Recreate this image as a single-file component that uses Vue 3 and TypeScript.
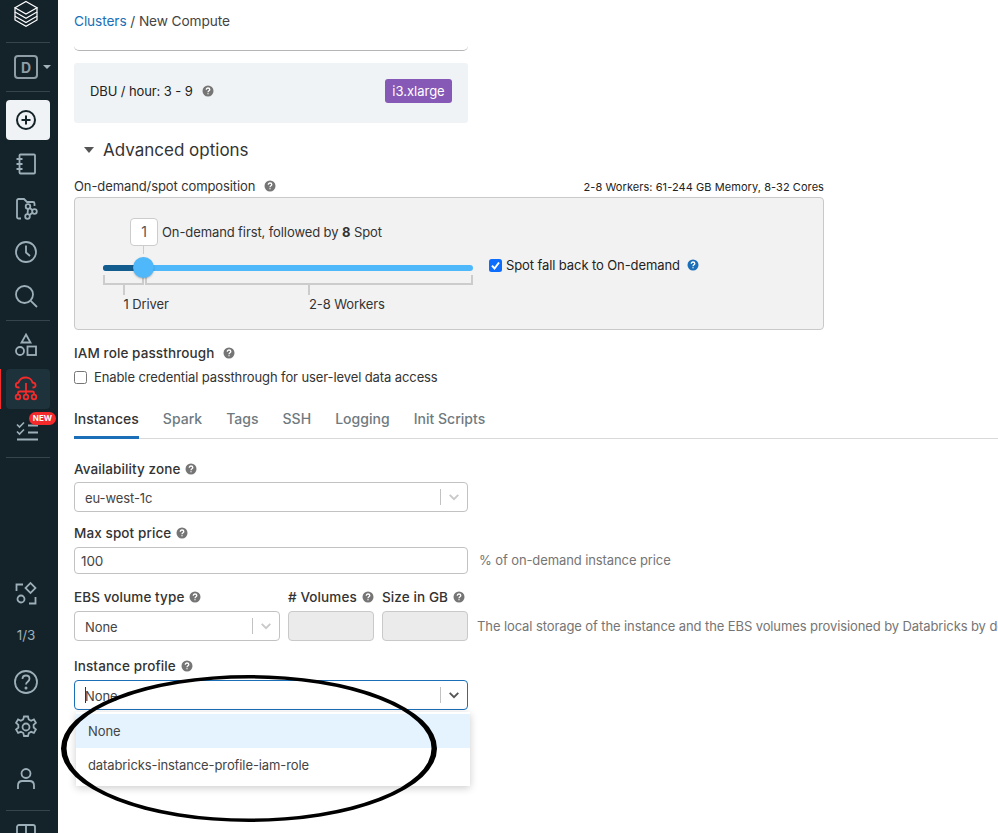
<script setup lang="ts">
const tabs: string[] = ['Instances', 'Spark', 'Tags', 'SSH', 'Logging', 'Init Scripts']
</script>

<template>
  <div class="page">
    <aside class="sidebar">
      <div class="logo">
        <svg width="28" height="28" viewBox="0 0 28 28" fill="none" stroke="#fff" stroke-width="1.2">
          <path d="M14 1.5 25 7.8 14 14 3 7.8Z" />
          <path d="M3 7.8V12L14 18.3 25 12V7.8" />
          <path d="M3 12V16.2L14 22.5 25 16.2V12" />
          <path d="M3 16.2V20L14 26.3 25 20V16.2" />
        </svg>
      </div>
      <div class="divider first"></div>
      <div class="workspace">
        <span class="ws-box">D</span>
        <span class="ws-caret"></span>
      </div>
      <div class="divider second"></div>

      <div class="nav create">
        <svg width="28" height="28" viewBox="0 0 28 28" fill="none" stroke="#14222a" stroke-width="2">
          <circle cx="14" cy="14" r="9" />
          <path d="M14 9.5v9M9.5 14h9" />
        </svg>
      </div>
      <div class="nav">
        <svg class="ico" viewBox="0 0 28 28">
          <rect x="7.5" y="4.500" width="15.500" height="19" rx="1" />
          <path d="M4.500 9h6M4.500 14h6M4.500 19h6" />
        </svg>
      </div>
      <div class="nav">
        <svg class="ico" viewBox="0 0 28 28">
          <path d="M9 24.500H6.500A1.500 1.500 0 0 1 5 23V6.500A1.500 1.500 0 0 1 6.500 5H12l3 3h6A1.500 1.500 0 0 1 22.500 9.500V12" />
          <circle cx="16" cy="12.500" r="2.300" />
          <circle cx="15.500" cy="22.500" r="2.300" />
          <circle cx="22.500" cy="17.500" r="2.300" />
          <path d="M16 14.800l-.5 5.400M17.800 14l2.700 2.300M17.500 21l3-2.300" />
        </svg>
      </div>
      <div class="nav">
        <svg class="ico" viewBox="0 0 28 28">
          <circle cx="14" cy="14" r="10" />
          <path d="M14 7.500V14.500L18 18" />
        </svg>
      </div>
      <div class="nav">
        <svg class="ico" viewBox="0 0 28 28">
          <circle cx="12.500" cy="12.500" r="8.500" />
          <path d="M18.800 18.800 25 25" />
        </svg>
      </div>
      <div class="divider third"></div>
      <div class="nav">
        <svg class="ico" viewBox="0 0 28 28">
          <path d="M14 3.500 18.500 11.500H9.500Z" />
          <circle cx="8" cy="20" r="4" />
          <rect x="15.500" y="15.500" width="8.500" height="8.500" />
        </svg>
      </div>
      <div class="nav active">
        <svg class="ico red" viewBox="0 0 28 28">
          <path d="M7.500 12.500H6.500C3 12.500 2.800 8 6.500 7.500 7.500 4 10.500 2.500 14 2.500 17 2.500 20 4.500 20.500 7.500 24.500 8 24.500 12.500 21 12.500H20.500" />
          <path d="M14 8V19.500M6 19.500V18c0-1 .5-1.500 1.500-1.500h13c1 0 1.500.5 1.500 1.500V19.500" />
          <circle cx="6" cy="22" r="2.300" />
          <circle cx="14" cy="22" r="2.300" />
          <circle cx="22" cy="22" r="2.300" />
        </svg>
      </div>
      <div class="nav tasks">
        <svg class="ico" viewBox="0 0 28 28">
          <path d="M16 8.500h10M16 15.500h10M5 22.500h21" />
          <path d="M5 7.500 7.500 10 12 5.500M5 14.500 7.500 17 12 12.500" stroke-width="1.700" />
        </svg>
        <span class="new-badge">NEW</span>
      </div>
      <div class="divider fourth"></div>

      <div class="bottom">
        <div class="nav short">
          <svg class="ico" viewBox="0 0 28 28">
            <path d="M4.500 11V4.500H11M23.500 17V23.500H17" />
            <rect x="15" y="4.500" width="7" height="7" transform="rotate(45 18.500 8)" />
            <circle cx="9" cy="19" r="3.500" />
          </svg>
        </div>
        <div class="count">1/3</div>
        <div class="nav help">
          <svg class="ico" viewBox="0 0 28 28">
            <circle cx="14" cy="14" r="11" />
            <path d="M10.500 11c0-2.300 1.600-3.500 3.500-3.500s3.500 1.300 3.500 3.300c0 3-3.500 2.800-3.500 5.700" />
            <circle cx="14" cy="20" r=".6" />
          </svg>
        </div>
        <div class="nav">
          <svg class="ico" viewBox="0 0 28 28">
            <circle cx="14" cy="14" r="3.500" />
            <path d="M12 3.500h4l.7 3 2.400 1.200 2.800-1.300 2 3.400-2.300 2 .1 2.700 2.200 2-2 3.400-2.800-1.100-2.300 1.300-.8 2.900h-4l-.7-3-2.400-1.200-2.800 1.100-2-3.400 2.300-2-.1-2.700-2.200-2 2-3.400 2.800 1.300 2.300-1.300z" />
          </svg>
        </div>
        <div class="nav user">
          <svg class="ico" viewBox="0 0 28 28">
            <circle cx="14" cy="8.500" r="4.500" />
            <path d="M6 24v-3.500c0-3 2-4.500 4.500-4.500h7c2.500 0 4.500 1.500 4.500 4.500V24" />
          </svg>
        </div>
        <div class="divider fifth"></div>
        <div class="panel">
          <svg class="ico" viewBox="0 0 28 28">
            <rect x="5" y="5" width="18" height="18" rx="2" />
            <path d="M14 5v18" />
          </svg>
        </div>
      </div>
    </aside>

    <main class="main">
      <nav class="crumbs"><a>Clusters</a> / New Compute</nav>
      <div class="cut-field"></div>

      <section class="dbu">
        <span class="with-help">DBU / hour: 3 - 9
          <svg class="q" viewBox="0 0 12 12"><circle cx="6" cy="6" r="5.500" /><path d="M4.300 4.700C4.300 3.600 5 3 6 3s1.800.6 1.800 1.500C7.800 5.800 6 5.700 6 7.200M6 8.300v1" /></svg>
        </span>
        <span class="chip">i3.xlarge</span>
      </section>

      <h2 class="advanced"><span class="tri"></span>Advanced options</h2>

      <div class="comp-head">
        <span class="with-help">On-demand/spot composition
          <svg class="q" viewBox="0 0 12 12"><circle cx="6" cy="6" r="5.500" /><path d="M4.300 4.700C4.300 3.600 5 3 6 3s1.800.6 1.800 1.500C7.800 5.800 6 5.700 6 7.200M6 8.300v1" /></svg>
        </span>
        <span class="comp-summary">2-8 Workers: 61-244 GB Memory, 8-32 Cores</span>
      </div>

      <section class="comp-box">
        <div class="slider">
          <div class="count-row">
            <span class="count-box">1</span>
            <span>On-demand first, followed by <b>8</b> Spot</span>
          </div>
          <div class="stem"></div>
          <div class="track">
            <div class="track-fill"></div>
            <div class="thumb"></div>
          </div>
          <div class="ranges">
            <div class="range driver">
              <div class="bracket"></div>
              <div class="drop"></div>
              <div class="range-label">1 Driver</div>
            </div>
            <div class="range workers">
              <div class="bracket"></div>
              <div class="drop"></div>
              <div class="range-label">2-8 Workers</div>
            </div>
          </div>
        </div>
        <label class="fallback">
          <span class="check on">
            <svg viewBox="0 0 13 13" width="13" height="13"><path d="M3 6.700 5.500 9.500 10 3.500" fill="none" stroke="#fff" stroke-width="2" /></svg>
          </span>
          <span>Spot fall back to On-demand</span>
          <svg class="q blue" viewBox="0 0 12 12"><circle cx="6" cy="6" r="5.500" /><path d="M4.300 4.700C4.300 3.600 5 3 6 3s1.800.6 1.800 1.500C7.800 5.800 6 5.700 6 7.200M6 8.300v1" /></svg>
        </label>
      </section>

      <div class="iam-label">IAM role passthrough
        <svg class="q" viewBox="0 0 12 12"><circle cx="6" cy="6" r="5.500" /><path d="M4.300 4.700C4.300 3.600 5 3 6 3s1.800.6 1.800 1.500C7.800 5.800 6 5.700 6 7.200M6 8.300v1" /></svg>
      </div>
      <label class="iam-check"><span class="check"></span>Enable credential passthrough for user-level data access</label>

      <div class="tabs">
        <span v-for="(t, i) in tabs" :key="t" class="tab" :class="{ current: i === 0 }">{{ t }}</span>
      </div>

      <div class="field-label first-label">Availability zone
        <svg class="q" viewBox="0 0 12 12"><circle cx="6" cy="6" r="5.500" /><path d="M4.300 4.700C4.300 3.600 5 3 6 3s1.800.6 1.800 1.500C7.800 5.800 6 5.700 6 7.200M6 8.300v1" /></svg>
      </div>
      <div class="select full">
        <span class="value">eu-west-1c</span>
        <span class="sep"></span>
        <svg class="chev" viewBox="0 0 14 10"><path d="M2 2.500 7 7.500 12 2.500" /></svg>
      </div>

      <div class="field-label spot-label">Max spot price
        <svg class="q" viewBox="0 0 12 12"><circle cx="6" cy="6" r="5.500" /><path d="M4.300 4.700C4.300 3.600 5 3 6 3s1.800.6 1.800 1.500C7.800 5.800 6 5.700 6 7.200M6 8.300v1" /></svg>
      </div>
      <div class="spot-row">
        <div class="text-input">100</div>
        <span class="hint spot-hint">% of on-demand instance price</span>
      </div>

      <div class="ebs-labels">
        <div class="field-label ebs-type">EBS volume type
          <svg class="q" viewBox="0 0 12 12"><circle cx="6" cy="6" r="5.500" /><path d="M4.300 4.700C4.300 3.600 5 3 6 3s1.800.6 1.800 1.500C7.800 5.800 6 5.700 6 7.200M6 8.300v1" /></svg>
        </div>
        <div class="field-label ebs-num"># Volumes
          <svg class="q" viewBox="0 0 12 12"><circle cx="6" cy="6" r="5.500" /><path d="M4.300 4.700C4.300 3.600 5 3 6 3s1.800.6 1.800 1.500C7.800 5.800 6 5.700 6 7.200M6 8.300v1" /></svg>
        </div>
        <div class="field-label ebs-num">Size in GB
          <svg class="q" viewBox="0 0 12 12"><circle cx="6" cy="6" r="5.500" /><path d="M4.300 4.700C4.300 3.600 5 3 6 3s1.800.6 1.800 1.500C7.800 5.800 6 5.700 6 7.200M6 8.300v1" /></svg>
        </div>
      </div>
      <div class="ebs-row">
        <div class="select ebs-select">
          <span class="value">None</span>
          <span class="sep"></span>
          <svg class="chev" viewBox="0 0 14 10"><path d="M2 2.500 7 7.500 12 2.500" /></svg>
        </div>
        <div class="disabled-input"></div>
        <div class="disabled-input"></div>
        <span class="hint ebs-hint">The local storage of the instance and the EBS volumes provisioned by Databricks by default</span>
      </div>

      <div class="field-label profile-label">Instance profile
        <svg class="q" viewBox="0 0 12 12"><circle cx="6" cy="6" r="5.500" /><path d="M4.300 4.700C4.300 3.600 5 3 6 3s1.800.6 1.800 1.500C7.800 5.800 6 5.700 6 7.200M6 8.300v1" /></svg>
      </div>
      <div class="profile-wrap">
        <div class="select full focused">
          <span class="caret"></span>
          <span class="value">None</span>
          <span class="sep"></span>
          <svg class="chev dark" viewBox="0 0 14 10"><path d="M2 2.500 7 7.500 12 2.500" /></svg>
        </div>
        <ul class="menu">
          <li class="hover">None</li>
          <li>databricks-instance-profile-iam-role</li>
        </ul>
      </div>
    </main>

    <svg class="annotation" viewBox="0 0 998 833" width="998" height="833">
      <path fill-rule="evenodd" fill="#000" d="M61 748.500a188 73.500 0 1 0 376 0a188 73.500 0 1 0 -376 0ZM66.500 748.500a182.500 70 0 1 1 365 0a182.500 70 0 1 1 -365 0Z" />
    </svg>
  </div>
</template>

<style>
html, body { margin: 0; background: #fff; }
</style>

<style scoped>
.page {
  position: relative;
  display: flex;
  width: 998px;
  height: 833px;
  overflow: hidden;
  font-family: Inter, "Liberation Sans", sans-serif;
  font-size: 13px;
  letter-spacing: -0.1px;
  color: #333;
  background: #fff;
}

/* ---------- sidebar ---------- */
.sidebar {
  flex: 0 0 58px;
  height: 833px;
  box-sizing: border-box;
  padding-right: 6px;
  display: flex;
  flex-direction: column;
  background: #14222a;
}
.logo { height: 28px; display: flex; justify-content: center; }
.divider { height: 1px; margin: 0 2px 0 6px; background: #36454d; flex: none; }
.divider.first { margin-top: 14px; }
.workspace { height: 48px; position: relative; display: flex; align-items: center; padding-left: 14px; }
.ws-box {
  width: 24px; height: 24px; box-sizing: border-box;
  border: 2px solid #8f9ea6; border-radius: 4px;
  display: flex; align-items: center; justify-content: center;
  font-weight: 700; font-size: 14px; color: #8f9ea6;
}
.ws-caret {
  margin-left: 5px;
  border: 4px solid transparent; border-top: 4px solid #a5b2b9; border-bottom: 0;
}
.divider.second { margin-bottom: 6px; }
.nav {
  position: relative;
  height: 44px;
  display: flex;
  align-items: center;
  justify-content: center;
  flex: none;
}
.ico { width: 28px; height: 28px; fill: none; stroke: #9db0b9; stroke-width: 1.800; }
.ico.red { stroke: #f52b2b; }
.create {
  height: 40px; margin: 2px 2px 2px 6px; padding-right: 4px; background: #f0f3f5; border-radius: 4px;
}
.divider.third { margin-top: 2px; margin-bottom: 2px; }
.active {
  height: 40px; margin: 2px 2px 0 6px; padding-right: 4px; background: #1e323c; border-radius: 4px;
}
.active::before {
  content: ""; position: absolute; left: -6px; top: 0; width: 1px; height: 40px; background: #f52b2b;
}
.tasks { height: 44px; }
.new-badge {
  position: absolute; left: 29px; top: 3px;
  width: 27px; height: 13px; border-radius: 7px;
  background: #f52b2b; color: #fff;
  font-size: 8px; font-weight: 700; line-height: 13px; text-align: center; letter-spacing: 0;
}
.divider.fourth { margin-top: 4px; }
.bottom { margin-top: auto; display: flex; flex-direction: column; }
.short { height: 38px; }
.count { height: 46px; line-height: 44px; text-align: center; color: #9db0b9; font-size: 13.500px; }
.help { height: 46px; }
.user { height: 44px; margin-top: 8px; }
.divider.fifth { margin-top: 9px; }
.panel { height: 22px; display: flex; justify-content: center; overflow: hidden; align-items: flex-start; }
.panel .ico { margin-top: 9px; flex: none; }

/* ---------- main ---------- */
.main { flex: 1; min-width: 0; padding-left: 16px; }
.crumbs { height: 21px; padding-top: 11px; line-height: 20px; font-size: 13.700px; color: #444; }
.crumbs a { color: #1b6fb8; }
.cut-field {
  width: 394px; height: 19px; box-sizing: border-box;
  border-bottom: 1px solid #b5b5b5; border-radius: 0 0 5px 5px;
}
.dbu {
  width: 394px; height: 60px; margin-top: 12px; box-sizing: border-box;
  padding: 0 16px 4px; display: flex; align-items: center; justify-content: space-between;
  background: #f0f3f5; border-radius: 3px; color: #222;
}
.with-help { display: inline-flex; align-items: center; gap: 9px; white-space: nowrap; }
.q { width: 12px; height: 12px; flex: none; }
.q circle { fill: #757575; }
.q path { fill: none; stroke: #fff; stroke-width: 1.300; }
.q.blue circle { fill: #1b6fb8; }
.chip {
  width: 67px; height: 24px; border-radius: 3px;
  background: #8559b5; color: #fff; text-align: center; line-height: 25px; letter-spacing: 0;
}
.advanced {
  display: flex; align-items: center;
  height: 30px; margin: 12px 0 0 10px;
  font-size: 17px; font-weight: 400; color: #333; letter-spacing: 0;
}
.tri {
  width: 0; height: 0; margin-right: 9px;
  border: 5px solid transparent; border-top: 6px solid #555; border-bottom: 0;
}
.comp-head {
  width: 750px; height: 22px; margin-top: 10px;
  display: flex; align-items: center; justify-content: space-between;
}
.comp-summary { font-size: 11px; color: #222; letter-spacing: .07px; padding-top: 2px; }
.comp-box {
  width: 750px; height: 133px; box-sizing: border-box;
  padding: 20px 0 0 28px;
  display: flex;
  background: #f2f2f2; border: 1px solid #c9c9c9; border-radius: 4px;
}
.slider { width: 370px; flex: none; }
.count-row { display: flex; align-items: center; gap: 4px; margin-left: 27px; height: 28px; white-space: nowrap; }
.count-box {
  width: 28px; height: 28px; box-sizing: border-box;
  border: 1px solid #ccc; border-radius: 4px; background: #fff;
  text-align: center; line-height: 26px; font-size: 14px; color: #555;
}
.stem { width: 1px; height: 8px; margin: 0 0 11px 40px; background: #ccc; }
.track { position: relative; height: 6px; border-radius: 3px; background: #4fb8fb; }
.track-fill { width: 42px; height: 6px; border-radius: 3px; background: #135c8e; }
.thumb {
  position: absolute; left: 30px; top: -8px;
  width: 21px; height: 21px; border-radius: 50%;
  background: #4fb8fb; box-shadow: 0 1px 2px rgba(0,0,0,.25);
}
.ranges { display: flex; gap: 1px; margin-top: 4px; }
.driver { width: 41px; flex: none; }
.workers { flex: 1; }
.bracket { height: 10px; box-sizing: border-box; border: 2px solid #ccc; border-top: 0; }
.drop { width: 2px; height: 10px; margin-left: calc(50% - 1px); background: #ccc; }
.range-label { margin-left: 50%; margin-top: 1px; white-space: nowrap; color: #333; line-height: 16px; }
.fallback {
  display: flex; align-items: center; gap: 4px;
  height: 16px; margin: 39px 0 0 16px; white-space: nowrap; color: #222;
}
.check {
  width: 13px; height: 13px; box-sizing: border-box;
  border: 1px solid #767676; border-radius: 2.500px; background: #fff; flex: none;
  display: inline-block;
}
.check.on { border: 0; background: #0d6efd; }
.check.on svg { display: block; }
.fallback .q { margin-left: 3px; }
.iam-label {
  display: flex; align-items: center; gap: 9px; height: 18px; margin-top: 14px;
  font-size: 13.500px; font-weight: 500; color: #333; letter-spacing: .1px;
}
.iam-check { display: flex; align-items: center; gap: 7px; height: 18px; margin-top: 6px; white-space: nowrap; color: #333; }
.tabs {
  display: flex; gap: 24px; height: 35px; margin-top: 18px; box-sizing: border-box;
  border-bottom: 1px solid #d9d9d9;
}
.tab { height: 35px; box-sizing: border-box; line-height: 30px; font-size: 14px; font-weight: 500; color: #6f7a80; letter-spacing: .02px; }
.tab.current { color: #333; border-bottom: 3px solid #1b6fb8; letter-spacing: 0; }

.field-label {
  display: flex; align-items: center; gap: 5px;
  height: 18px; font-weight: 500; color: #333; white-space: nowrap; font-size: 13.500px; letter-spacing: .1px;
}
.first-label { margin-top: 21px; }
.select {
  display: flex; align-items: center; box-sizing: border-box;
  height: 30px; padding: 0 7px 0 10px;
  background: #fff; border: 1px solid #c2c2c2; border-radius: 4px; color: #444;
}
.full { width: 394px; margin-top: 4px; }
.value { flex: 1; padding-top: 1px; }
.sep { width: 1px; height: 16px; background: #c2c2c2; margin-right: 7px; }
.chev { width: 12px; height: 10px; fill: none; stroke: #c9c9c9; stroke-width: 2.200; }
.chev.dark { stroke: #555; }
.spot-label { margin-top: 12px; }
.spot-row { display: flex; align-items: center; margin-top: 5px; }
.text-input {
  width: 394px; height: 27px; box-sizing: border-box;
  padding: 0 6px; line-height: 26px; font-size: 13.500px;
  background: #fff; border: 1px solid #c2c2c2; border-radius: 4px; color: #444;
}
.hint { margin-left: 11px; color: #757575; white-space: nowrap; }
.spot-hint { margin-top: -2px; }
.ebs-labels { display: flex; margin-top: 14px; gap: 8px; }
.ebs-type { width: 206px; }
.ebs-num { width: 86px; }
.ebs-row { display: flex; margin-top: 5px; gap: 8px; align-items: center; }
.ebs-select { width: 206px; flex: none; }
.disabled-input {
  width: 86px; height: 30px; box-sizing: border-box; flex: none;
  background: #ebebeb; border: 1px solid #c9c9c9; border-radius: 4px;
}
.ebs-hint { margin-left: 1px; }
.profile-label { margin-top: 16px; }
.profile-wrap { position: relative; margin-top: 5px; }
.profile-wrap .full { margin-top: 0; }
.focused { border: 1.500px solid #1b6fb8; position: relative; }
.caret { position: absolute; left: 10px; top: 6px; width: 1px; height: 16px; background: #333; }
.menu {
  position: absolute; left: 2px; top: 32px;
  width: 394px; margin: 0; padding: 2px 0 4px; list-style: none;
  background: #fff; box-shadow: 0 2px 8px rgba(0,0,0,.2);
  color: #444;
}
.menu li { height: 34px; line-height: 34px; padding-left: 12px; }
.menu li.hover { background: #e4f3fd; }

.annotation { position: absolute; left: 0; top: 0; pointer-events: none; filter: blur(.4px); }
</style>
